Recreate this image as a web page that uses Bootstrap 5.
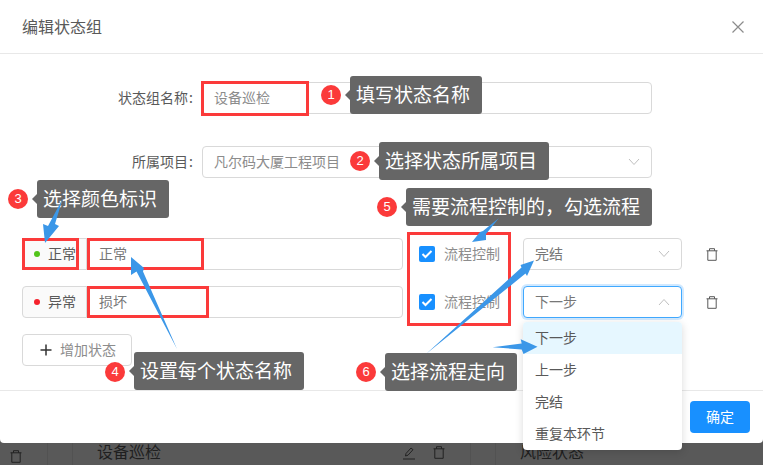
<!DOCTYPE html>
<html lang="zh">
<head>
<meta charset="utf-8">
<title>编辑状态组</title>
<link href="https://cdn.jsdelivr.net/npm/bootstrap@5.3.0/dist/css/bootstrap.min.css" rel="stylesheet">
<style>
html,body{margin:0;height:465px;overflow:hidden;background:#595959}
body{font-family:"Noto Sans CJK SC","Liberation Sans",sans-serif;font-size:14px;color:#595959;position:relative}
.dlg{height:443px;background:#fff;border:0;border-radius:0 0 4px 4px;display:flex;flex-direction:column}
.dlg .modal-header{height:54px;padding:0 18px 0 22px;border-bottom:1px solid #e8e8e8;border-radius:0}
.dlg-title{font-size:16px;font-weight:400;color:#595959;margin:0}
.x-btn{background:none;border:0;padding:0;line-height:0}
.dlg .modal-body{padding:28px 22px 0;flex:1 1 auto}
.line{display:flex;align-items:center}
.line-a{margin-bottom:32px}
.line-b{margin-bottom:60px}
.line-s{margin-bottom:16px}
.lbl{width:180px;text-align:right;color:#595959;padding-right:9px;line-height:30px;height:32px}
.lbl i{font-style:normal;margin-left:1px}
.fld{height:32px;border:1px solid #d9d9d9;border-radius:4px;background:#fff;color:#8c8c8c;font-size:14px;padding:0 11px;line-height:28px;box-shadow:none}
.fld-wide{width:450px}
.sel{display:flex;align-items:center;justify-content:space-between}
.sel span{padding-bottom:2px}
.sta{width:381px;flex-wrap:nowrap}
.sta .input-group-text{height:32px;width:65px;padding:0 0 2px 11px;background:#fafafa;border-color:#d9d9d9;border-radius:4px 0 0 4px;color:#595959;font-size:14px;gap:8px}
.sta .fld{border-radius:0 4px 4px 0;padding-left:12px;margin-left:-1px;flex:1;color:#777}
.dot{width:6px;height:6px;border-radius:50%;display:inline-block;margin-top:2px}
.chk{display:flex;align-items:center;width:104px;margin-left:16px;color:#8c8c8c;gap:9px}
.chk b{font-weight:400;padding-bottom:2px}
.box{width:16px;height:16px;background:#1890ff;border-radius:2px;display:flex;align-items:center;justify-content:center}
.dd-wrap{position:relative;width:159px}
.dd-wrap .fld{color:#777}
.fld.open{border-color:#40a9ff;box-shadow:0 0 0 2px rgba(24,144,255,.2)}
.menu{position:absolute;left:0;top:36px;width:100%;background:#fff;border-radius:4px;box-shadow:0 2px 8px rgba(0,0,0,.15);z-index:3;overflow:hidden}
.opt{height:32px;line-height:30px;padding:0 12px;color:#595959}
.opt-on{background:#e6f7ff}
.trash{margin-left:24px;line-height:0}
.add-btn{width:110px;height:32px;border:1px solid #d9d9d9;border-radius:4px;background:#fff;color:#8c8c8c;font-size:14px;padding:0 0 0 17px;display:flex;align-items:center;gap:8px}
.add-btn span{padding-bottom:2px}
.dlg .modal-footer{height:53px;padding:10px 13px 10px 0;border-top:1px solid #e8e8e8;border-radius:0;display:flex;justify-content:flex-end;align-items:flex-start}
.ok-btn{width:60px;height:32px;padding:0 0 2px;background:#1890ff;border:0;border-radius:4px;color:#fff;font-size:14px;margin:0}
.under{height:22px;color:#1f1f1f;font-size:16px;display:grid;grid-template-columns:48px 25px 398px 25px 1fr}
.under>div{border-right:1px solid #525252;height:22px;line-height:17px;white-space:nowrap}
.cell-i{padding:3px 0 0 10px}
.cell-t{padding-left:24px;display:flex;align-items:flex-start}
.cell-e{border-right:0!important}
.cell-ic{margin-left:auto;padding:3px 25px 0 0;display:flex;gap:17px;line-height:0}
.redbox{position:absolute;border:3px solid #fb3a3a;z-index:5}
.rb1{left:201px;top:81px;width:108px;height:35px}
.rb2{left:22px;top:238px;width:57px;height:32px}
.rb3{left:87px;top:238px;width:117px;height:32px}
.rb4{left:87px;top:286px;width:122px;height:32px}
.rb5{left:407px;top:232px;width:104px;height:94px}
.tipnote{position:absolute;height:38px;background:#666;border-radius:3px;color:#fff;font-size:19px;line-height:36px;padding-left:6px;z-index:6;white-space:nowrap}
.tipnote::before{content:"";position:absolute;left:-5px;top:14px;border-style:solid;border-width:5px 5px 5px 0;border-color:transparent #666 transparent transparent}
.t1{left:350px;top:76px;width:132px}
.t2{left:379px;top:142px;width:170px}
.t3{left:37px;top:180px;width:132px}
.t4{left:134px;top:352px;width:170px}
.t5{left:406px;top:188px;width:246px}
.t6{left:385px;top:353px;width:132px}
.num{position:absolute;width:20px;height:20px;border-radius:50%;background:#fb3a3a;color:#fff;font-size:13px;line-height:20px;text-align:center;z-index:6;font-family:"Liberation Sans",sans-serif}
.n1{left:321px;top:85px}
.n2{left:350px;top:151px}
.n3{left:8px;top:189px}
.n4{left:105px;top:362px}
.n5{left:377px;top:197px}
.n6{left:356px;top:362px}
.arrows{position:absolute;left:0;top:0;z-index:7;pointer-events:none}
</style>
</head>
<body>
<div class="modal-content dlg">
  <div class="modal-header">
    <h5 class="dlg-title">编辑状态组</h5>
    <button class="x-btn ms-auto" type="button" aria-label="关闭"><svg width="14" height="14" viewBox="0 0 14 14"><path d="M1.500 1.500l11 11M12.500 1.500l-11 11" stroke="#8c8c8c" stroke-width="1.200" fill="none"/></svg></button>
  </div>
  <div class="modal-body">
    <div class="line line-a">
      <div class="lbl">状态组名称<i>:</i></div>
      <div class="fld fld-wide">设备巡检</div>
    </div>
    <div class="line line-b">
      <div class="lbl">所属项目<i>:</i></div>
      <div class="fld fld-wide sel"><span>凡尔码大厦工程项目</span><svg width="12" height="8" viewBox="0 0 12 8"><path d="M1 1l5 5.500L11 1" stroke="#bfbfbf" fill="none"/></svg></div>
    </div>
    <div class="line line-s">
      <div class="input-group sta">
        <span class="input-group-text"><i class="dot" style="background:#52c41a"></i>正常</span>
        <div class="fld">正常</div>
      </div>
      <label class="chk"><span class="box"><svg width="12" height="10" viewBox="0 0 12 10"><path d="M1.500 5l3 3L10.500 2" stroke="#fff" stroke-width="2" fill="none"/></svg></span><b>流程控制</b></label>
      <div class="dd-wrap"><div class="fld sel"><span>完结</span><svg width="12" height="8" viewBox="0 0 12 8"><path d="M1 1l5 5.500L11 1" stroke="#bfbfbf" fill="none"/></svg></div></div>
      <span class="trash"><svg width="12" height="13" viewBox="0 0 12 13"><path d="M.5 2.800h11M3.500 2.800V.7h5v2.100M1.800 2.800v9.500h8.400V2.800" stroke="#595959" fill="none"/></svg></span>
    </div>
    <div class="line line-s">
      <div class="input-group sta">
        <span class="input-group-text"><i class="dot" style="background:#f5222d"></i>异常</span>
        <div class="fld">损坏</div>
      </div>
      <label class="chk"><span class="box"><svg width="12" height="10" viewBox="0 0 12 10"><path d="M1.500 5l3 3L10.500 2" stroke="#fff" stroke-width="2" fill="none"/></svg></span><b>流程控制</b></label>
      <div class="dd-wrap">
        <div class="fld sel open"><span>下一步</span><svg width="12" height="8" viewBox="0 0 12 8"><path d="M1 7l5-5.500L11 7" stroke="#bfbfbf" fill="none"/></svg></div>
        <div class="menu">
          <div class="opt opt-on">下一步</div>
          <div class="opt">上一步</div>
          <div class="opt">完结</div>
          <div class="opt">重复本环节</div>
        </div>
      </div>
      <span class="trash"><svg width="12" height="13" viewBox="0 0 12 13"><path d="M.5 2.800h11M3.500 2.800V.7h5v2.100M1.800 2.800v9.500h8.400V2.800" stroke="#595959" fill="none"/></svg></span>
    </div>
    <button class="add-btn" type="button"><svg width="12" height="12" viewBox="0 0 12 12"><path d="M6 .5v11M.5 6h11" stroke="#333" stroke-width="1.500" fill="none"/></svg><span>增加状态</span></button>
  </div>
  <div class="modal-footer"><button class="ok-btn" type="button">确定</button></div>
</div>
<div class="under">
  <div class="cell-i"><svg width="12" height="13" viewBox="0 0 12 13"><path d="M.5 2.800h11M3.500 2.800V.7h5v2.100M1.800 2.800v9.500h8.400V2.800" stroke="#222" fill="none"/></svg></div>
  <div></div>
  <div class="cell-t"><span>设备巡检</span><span class="cell-ic"><svg width="14" height="14" viewBox="0 0 14 14"><path d="M1 13h12M3.500 10l.5-2.500 5-5.500 2 1.700-5 5.500z" stroke="#222" fill="none"/></svg><svg width="12" height="13" viewBox="0 0 12 13"><path d="M.5 2.800h11M3.500 2.800V.7h5v2.100M1.800 2.800v9.500h8.400V2.800" stroke="#222" fill="none"/></svg></span></div>
  <div></div>
  <div class="cell-t cell-e"><span>风险状态</span></div>
</div>

<div class="redbox rb1"></div><div class="redbox rb2"></div><div class="redbox rb3"></div><div class="redbox rb4"></div><div class="redbox rb5"></div>

<span class="num n1">1</span><div class="tipnote t1">填写状态名称</div>
<span class="num n2">2</span><div class="tipnote t2">选择状态所属项目</div>
<span class="num n3">3</span><div class="tipnote t3">选择颜色标识</div>
<span class="num n4">4</span><div class="tipnote t4">设置每个状态名称</div>
<span class="num n5">5</span><div class="tipnote t5">需要流程控制的&#65292;勾选流程</div>
<span class="num n6">6</span><div class="tipnote t6">选择流程走向</div>

<svg class="arrows" width="763" height="465" viewBox="0 0 763 465" aria-hidden="true"><g fill="#3b97e8">
<polygon points="62.500,199 55,224 59,226 45,243 43,224 48,226"/>
<polygon points="499,218 486,234 486,240 472,242 480,232 483,231"/>
<polygon points="131,257 144,268 143,271.500 177,349 136.500,271.500 131,275"/>
<polygon points="534,260.500 527,276 525.500,273.500 426,354 521.500,267.500 520.500,265"/>
<polygon points="537.500,346.700 523.500,354 521.700,349.500 492.700,347.300 521.700,343.500 520.700,339.300"/>
</g></svg>
<script src="https://cdn.jsdelivr.net/npm/bootstrap@5.3.0/dist/js/bootstrap.bundle.min.js"></script>
</body>
</html>
